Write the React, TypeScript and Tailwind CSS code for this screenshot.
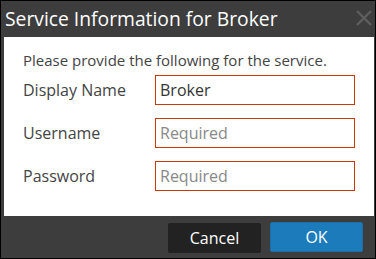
export default function App() {
  const rows = [
    { label: 'Display Name', value: 'Broker' },
    { label: 'Username', value: '' },
    { label: 'Password', value: '' },
  ]

  return (
    <div className="flex h-[259px] w-[376px] flex-col border border-black bg-[#3d3d3d] font-['Open_Sans',sans-serif]">
      <div className="flex h-[36px] items-center justify-between pl-[4px] pr-[3px]">
        <h1 className="text-[19.3px] leading-none text-white">Service Information for Broker</h1>
        <svg width="16" height="16" viewBox="0 0 16 16" className="mt-[-3px]">
          <path d="M1 1 L15 15 M15 1 L1 15" stroke="#5e5e5e" strokeWidth="2.4" />
        </svg>
      </div>

      <div className="ml-[3px] mr-[1px] h-[179px] bg-white pl-[19px] pt-[13px]">
        <p className="text-[15px] leading-[20px] text-[#444]">Please provide the following for the service.</p>
        <div className="mt-[5px] flex flex-col gap-[13px]">
          {rows.map((row) => (
            <div key={row.label} className="flex items-center">
              <label className="w-[132px] text-[16px] text-[#444]">{row.label}</label>
              <input
                type="text"
                defaultValue={row.value}
                placeholder="Required"
                className="h-[30px] w-[200px] border border-[#c83a0a] px-[4px] text-[16px] text-[#333] outline-none placeholder:text-[#888]"
              />
            </div>
          ))}
        </div>
      </div>

      <div className="flex flex-1 items-center justify-end gap-[9px] pr-[12px]">
        <button type="button" className="mt-[2px] h-[30px] w-[93px] rounded-[2px] bg-[#222] text-[16px] text-white">
          Cancel
        </button>
        <button type="button" className="h-[30px] w-[93px] rounded-[2px] border border-[#1d6ea5] bg-[#1b7bbb] text-[16px] text-white">
          OK
        </button>
      </div>
    </div>
  )
}
